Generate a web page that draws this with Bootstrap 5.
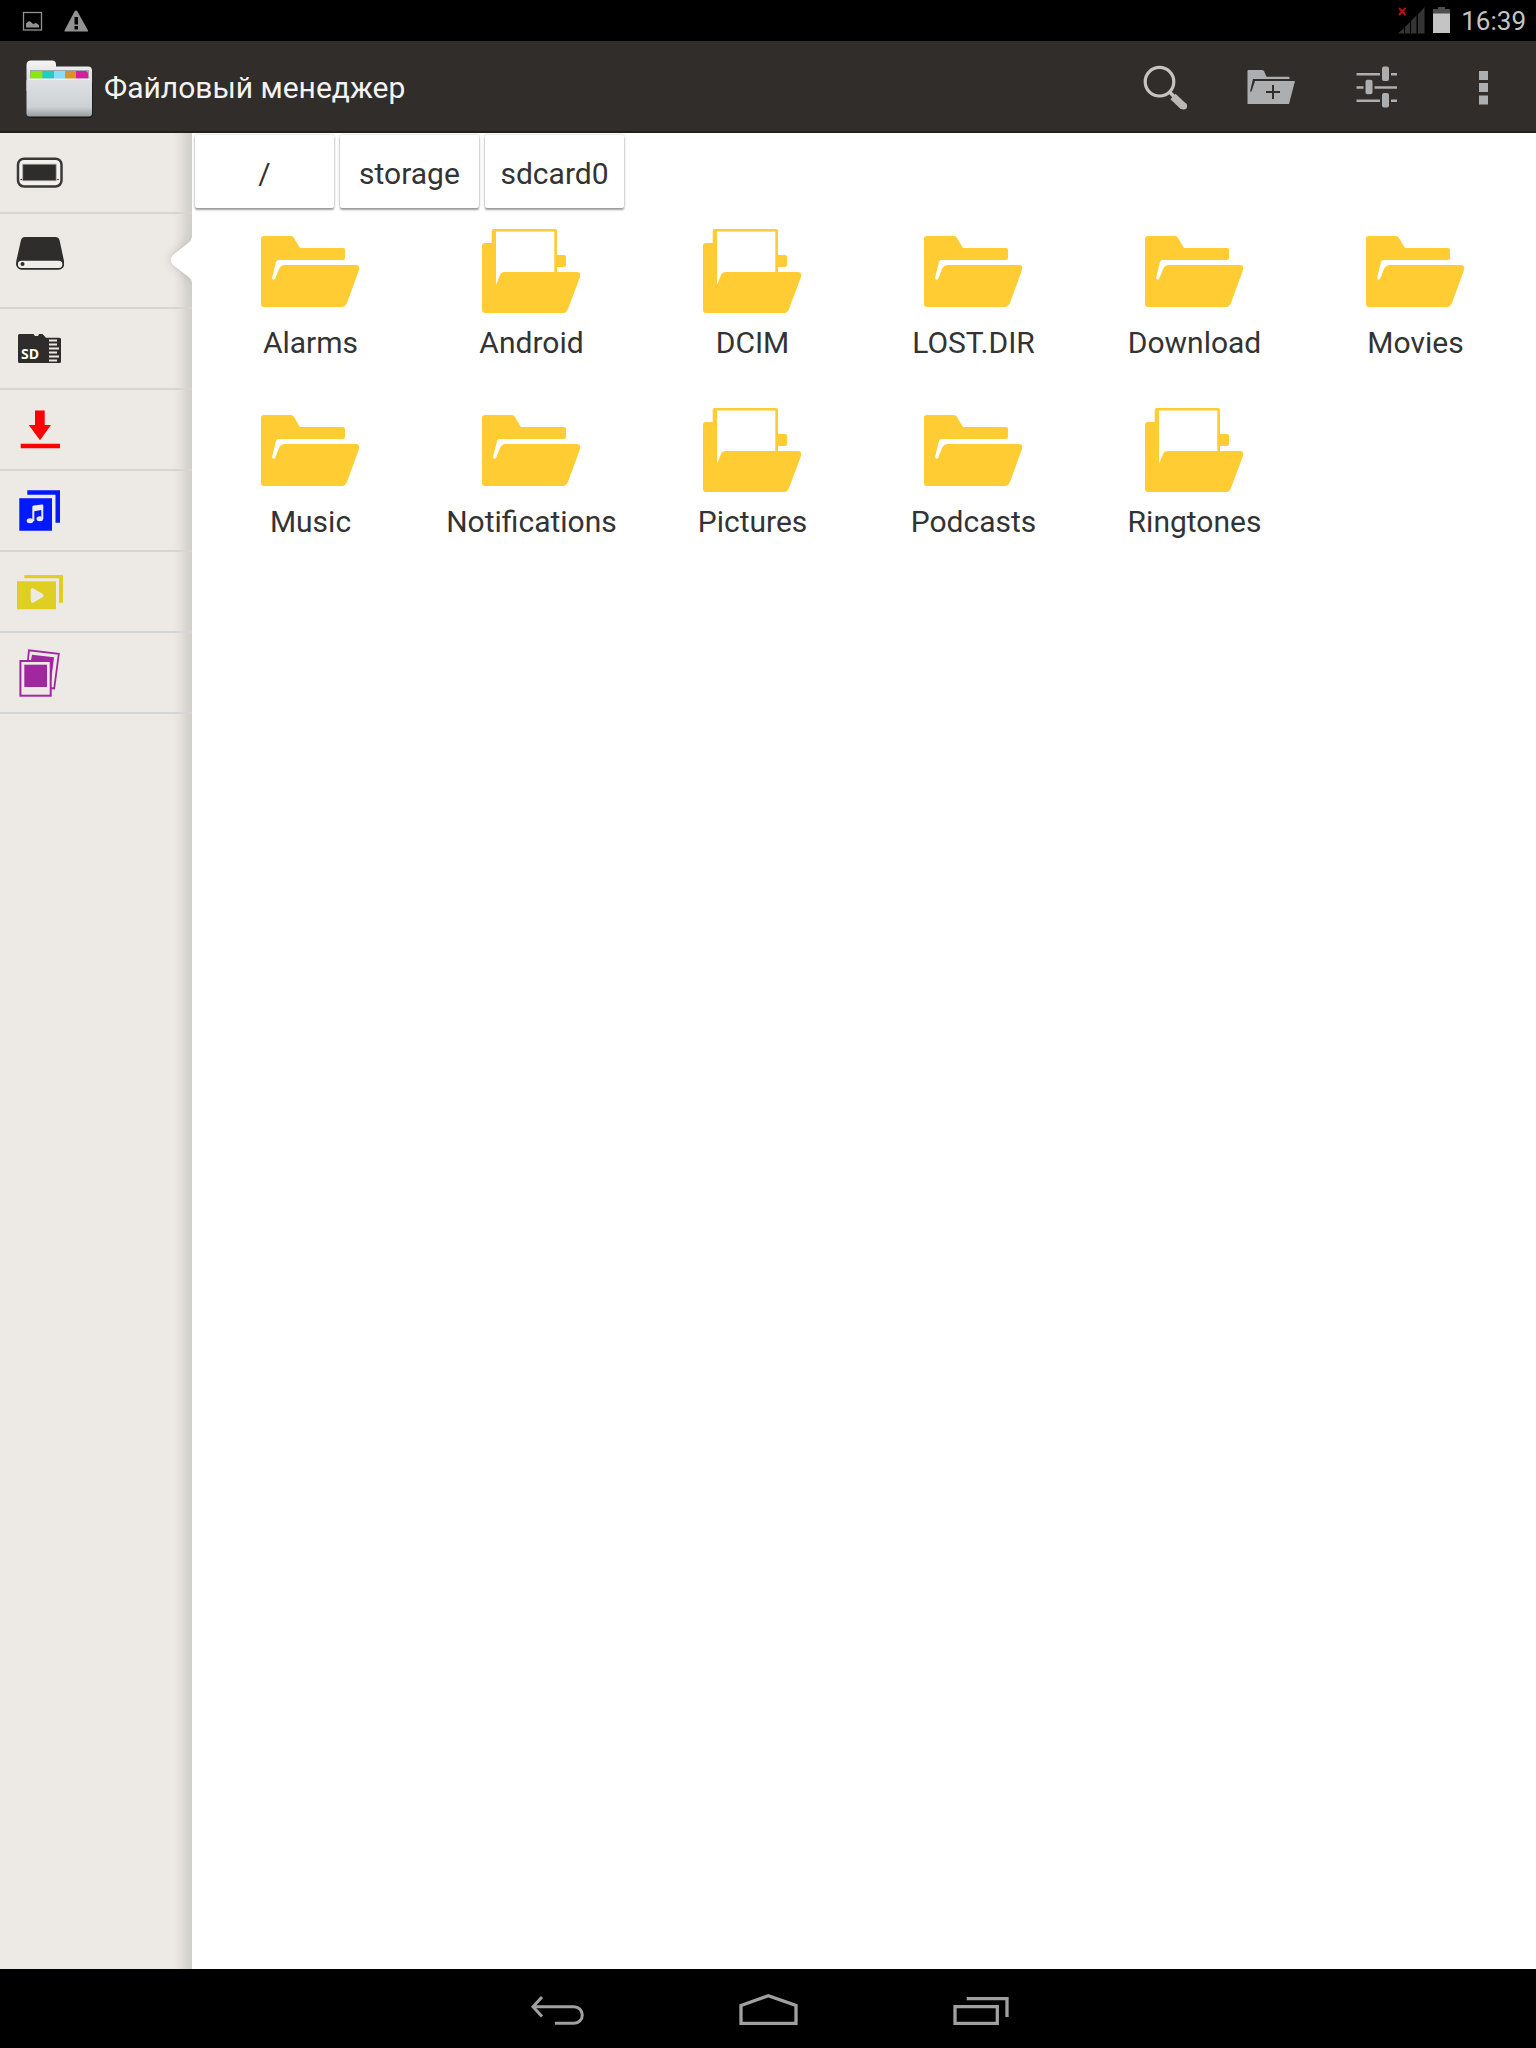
<!DOCTYPE html>
<html lang="ru">
<head>
<meta charset="utf-8">
<meta name="viewport" content="width=device-width, initial-scale=1">
<title>Файловый менеджер</title>
<link href="https://cdn.jsdelivr.net/npm/bootstrap@5.3.0/dist/css/bootstrap.min.css" rel="stylesheet">
<style>
  body { font-family: Roboto, "Noto Sans", sans-serif; font-size: 30px; line-height: 36px; color: #333; background: #fff; }
  svg { display: block; flex-shrink: 0; }

  .status-strip { height: 41px; background: #000; padding: 0 10px 0 20px; }
  .status-icons { gap: 20px; }
  .clock { font-size: 26px; line-height: 32px; color: #c4c4c4; }

  .app-header { height: 92px; padding: 0 0 0 24px; background: #312d2b; box-shadow: inset 0 -2px 0 #231f1c; }
  .app-title { font-size: 30px; line-height: 36px; padding-top: 2px; color: #f3f3f3; }
  .action-btn { width: 106px; height: 92px; border: 0; border-radius: 0; }

  .side-panel { width: 192px; background: linear-gradient(to left, #d0cec8 0, #d8d6d0 6px, #e5e2dd 12px, #edeae5 19px); }
  .side-item { height: 81px; padding: 16px 16px 0; border-bottom: 2px solid #d5d5d5; }
  .side-item.current { height: 95px; }
  .side-pointer { right: 0; top: 8px; }

  .crumbs { padding: 2px 3px 0; gap: 6px; }
  .crumb-btn { min-width: 139px; height: 73px; padding: 4px 12px 0; border: 0; border-radius: 2px; background: #fff; color: #333; font-size: 30px; line-height: 36px; box-shadow: 0 2px 2px rgba(0,0,0,.35), 0 0 3px rgba(0,0,0,.22); }
  .file-grid { margin: 5px 10px 0 8px; }
  .file-link { height: 179px; padding-top: 8px; gap: 8px; color: #333; }

  .nav-strip { height: 79px; background: #000; }
  .nav-key { width: 212px; height: 79px; border: 0; border-radius: 0; }
</style>
</head>
<body class="d-flex flex-column min-vh-100">

<svg width="0" height="0" class="position-absolute" aria-hidden="true">
  <symbol id="folder-empty" viewBox="0 0 113 96">
    <path fill="#ffcc33" d="M7 18q0-3 3-3H37q2 0 3 2L46 27H89q2 0 2 2V37q0 2-2 2H24q-1 0-2 2L18 57q1 3 3 1L25 48q2-4 6-4H102q4 0 3 5L93 82q-2 4-5 4H10q-3 0-3-3Z"/>
  </symbol>
  <symbol id="folder-full" viewBox="0 0 113 96">
    <path fill="#ffcc33" fill-rule="evenodd" d="M7 25q0-3 3-3H16.700V10q0-2 2-2H80q2 0 2 2V34H89q2 0 2 2V44q0 2-2 2H82V51H102q4 0 3 5L93 88q-2 4-4 4H10q-3 0-3-3ZM21 10.500V64L25 54q1-3 5-3H79.300V10.500Z"/>
  </symbol>
</svg>

<div class="status-strip d-flex align-items-center justify-content-between">
  <div class="status-icons d-flex align-items-center">
    <svg width="24" height="24" viewBox="0 0 24 24" aria-hidden="true">
      <rect x="3.500" y="3.500" width="18" height="17.500" fill="none" stroke="#929292" stroke-width="1.300"/>
      <path fill="#929292" d="M6 18.500v-4l3-2.500 2 1 2 2 3-1 3 2v2.500z"/>
    </svg>
    <svg width="24" height="24" viewBox="0 0 24 24" aria-hidden="true">
      <path fill="#929292" fill-rule="evenodd" d="M12 1.500q1 0 1.500 1L24 21.500v1H.5v-1L10.500 2.500q.5-1 1.500-1zM10.500 8v7.500h3.500V8zM10.500 17v3.500h3.500V17z"/>
    </svg>
  </div>
  <div class="d-flex align-items-center">
    <svg width="34" height="32" viewBox="0 0 34 32" aria-hidden="true">
      <path fill="#343434" d="M2 28.500 8 23v5.500zM9 28.500V22l5-5v11.500zM15 28.500V16l5.500-5.500v18zM22 28.500V9.500L28.500 2v26.500z"/>
      <path stroke="#b81414" stroke-width="2" d="M3 3l6.500 7M9.500 3 3 10"/>
    </svg>
    <svg width="31" height="32" viewBox="0 0 31 32" aria-hidden="true">
      <path fill="#4d4d4d" d="M3 4h5V2h7v2h5v5H3z"/>
      <path fill="#c4c4c4" d="M3 8.500h17V28H3z"/>
    </svg>
    <time class="clock">16:39</time>
  </div>
</div>

<header class="app-header d-flex align-items-center">
  <svg width="72" height="72" viewBox="0 0 72 72" aria-hidden="true" class="me-2">
    <defs>
      <linearGradient id="logoBack" x1="0" y1="0" x2="0" y2="1"><stop offset="0" stop-color="#f4f5f6"/><stop offset="1" stop-color="#c9cccf"/></linearGradient>
      <linearGradient id="logoFront" x1="0" y1="0" x2="0" y2="1"><stop offset="0" stop-color="#dfe1e4"/><stop offset=".75" stop-color="#ced1d4"/><stop offset="1" stop-color="#999c9e"/></linearGradient>
    </defs>
    <rect x="3" y="30" width="66" height="37" rx="4" fill="#1d1b1a"/>
    <path fill="url(#logoBack)" d="M2.500 14q0-4.500 4.500-4.500H28q4 0 4 4v2H64q4 0 4 4V40H2.500z"/>
    <path fill="#a3a6a8" d="M6 19h59v10H6z"/>
    <path fill="#8ae80c" d="M9 20h9.500v8h-12v-6z"/>
    <path fill="#23cdbd" d="M18.500 20h11.500v8h-11.500z"/>
    <path fill="#84dcff" d="M30 20h11v8h-11z"/>
    <path fill="#db9324" d="M41 20h11v8h-11z"/>
    <path fill="#d4209a" d="M52 20h10l2 2v6h-12z"/>
    <rect x="2.500" y="27.500" width="65.500" height="38" rx="3" fill="url(#logoFront)"/>
    <path stroke="#f3f4f5" d="M4 28.300h62.500"/>
  </svg>
  <h1 class="app-title fw-normal mb-0 me-auto">Файловый менеджер</h1>
  <button type="button" class="action-btn btn p-0 d-flex align-items-center justify-content-center" aria-label="Поиск">
    <svg width="48" height="48" viewBox="0 0 48 48" fill="none" stroke="#c6c4c1">
      <circle cx="18.500" cy="18.700" r="14.300" stroke-width="3.200"/>
      <path stroke-width="3.600" d="M28 28.500l6 6"/>
      <path stroke="#bab7b4" stroke-width="7.500" stroke-linejoin="round" d="M32 33.500l10.500 10"/>
      <circle cx="42.500" cy="43" r="3.600" fill="#bab7b4" stroke="none"/>
    </svg>
  </button>
  <button type="button" class="action-btn btn p-0 d-flex align-items-center justify-content-center" aria-label="Новая папка">
    <svg width="48" height="48" viewBox="0 0 48 48">
      <path fill="#adaeb0" d="M.5 8q0-1 1-1H15q1 0 2 1l2.500 5.700H41.500q1 0 1 1V16H6L3 28.500h1.500L8 18H48L42 41H.5z"/>
      <path stroke="#312d2b" stroke-width="2" d="M19 29h14M26 22v14"/>
    </svg>
  </button>
  <button type="button" class="action-btn btn p-0 d-flex align-items-center justify-content-center" aria-label="Настройки">
    <svg width="48" height="48" viewBox="0 0 48 48" fill="#adaeb0">
      <path d="M3.500 10h23.500v2.500H3.500zM38 10h6v2.500h-6zM3.500 23.300h7v2.500h-7zM21.500 23.300H44v2.500H21.500zM3.500 36.500h23.500V39H3.500zM38 36.500h6V39h-6z"/>
      <rect x="29" y="3.500" width="7" height="14.500" rx="2"/>
      <rect x="12.500" y="16.800" width="7" height="14.500" rx="2"/>
      <rect x="29" y="30" width="7" height="14.500" rx="2"/>
    </svg>
  </button>
  <button type="button" class="action-btn btn p-0 d-flex align-items-center justify-content-center" aria-label="Ещё">
    <svg width="48" height="48" viewBox="0 0 48 48" fill="#adaeb0">
      <path d="M20 8h9v9h-9zM20 20h9v9h-9zM20 32.500h9v9h-9z"/>
    </svg>
  </button>
</header>

<div class="d-flex flex-grow-1">
  <nav class="side-panel flex-shrink-0 d-flex flex-column" aria-label="Разделы">
    <a href="#" class="side-item d-block" aria-label="Устройство">
      <svg width="48" height="48" viewBox="0 0 48 48" fill="#2e2d2b">
        <rect x="2" y="9.700" width="43.500" height="27.800" rx="6" fill="#f3f1ed" stroke="#3a3937" stroke-width="2.500"/>
        <path d="M6.700 15.200h33.500v16.500H6.700z" stroke="#aaa8a4" stroke-width=".7"/>
        <circle cx="5.200" cy="30.500" r=".8"/><circle cx="42" cy="30.500" r=".8"/>
      </svg>
    </a>
    <a href="#" class="side-item current d-block position-relative" aria-label="Накопитель" aria-current="page">
      <svg width="48" height="48" viewBox="0 0 48 48" fill="#2e2d2b">
        <path d="M5 10q1-3 4-3H39.500q3 0 4 3L48 31v4H.3v-4z"/>
        <rect x="1" y="29.800" width="46.300" height="9" rx="4.500" fill="#f0eeea" stroke="#2e2d2b" stroke-width="1.800"/>
        <circle cx="6.500" cy="34" r="2"/>
      </svg>
      <svg class="side-pointer position-absolute" width="40" height="78" viewBox="0 0 40 78" aria-hidden="true">
        <defs><filter id="soft" x="-50%" y="-50%" width="200%" height="200%"><feGaussianBlur stdDeviation="4"/></filter></defs>
        <path fill="#aaa7a0" opacity=".6" filter="url(#soft)" d="M40 15q-1 3-5 6L21 32q-5 5 0 11L35 55q4 3 5 7z"/>
        <path fill="#fff" d="M40 15q-1 4-4 6L21 33q-4.500 5 0 10L36 54.500q4 3 4 7z"/>
      </svg>
    </a>
    <a href="#" class="side-item d-block" aria-label="Карта SD">
      <svg width="48" height="48" viewBox="0 0 48 48" fill="#2e2d2b">
        <path d="M2 10.500q0-1.500 1.500-1.500H17.500l1.500 2h3l1-2h3.500l3.500 3.700H43.500q1.500 0 1.500 1.500V36.500q0 1.500-1.500 1.500H3.500q-1.500 0-1.500-1.500z"/>
        <path fill="#edeae5" d="M33 14.500h8v2h-8zM33 18.500h8v2h-8zM33 22.500h10v2h-10zM33 26.500h8v2h-8zM33 30.500h10v2h-10zM33 34.500h8v2h-8z"/>
        <text x="5" y="34" fill="#fff" font-family="Open Sans, sans-serif" font-weight="700" font-size="14">SD</text>
      </svg>
    </a>
    <a href="#" class="side-item d-block" aria-label="Загрузки">
      <svg width="48" height="48" viewBox="0 0 48 48" fill="#ff0000">
        <path d="M19 4.500h9.700V19H35L24 34.200 12.700 19H19zM4.700 37.700H44v4.600H4.700z"/>
      </svg>
    </a>
    <a href="#" class="side-item d-block" aria-label="Музыка">
      <svg width="48" height="48" viewBox="0 0 48 48" fill="#0019ff">
        <path d="M3.300 11.300H36v32.400H3.300zM11.300 3.300H44v32.400h-4.500V7.700H11.300z"/>
        <g fill="#edeae5"><path d="M16.300 20q0-1.200 1.300-1.400l8.500-1.200q1.200 0 1.200 1.200V32h-2v-9l-7 1.200v10h-2z"/><ellipse cx="14" cy="33.700" rx="3.300" ry="2.500"/><ellipse cx="23.800" cy="31.800" rx="3.300" ry="2.500"/></g>
      </svg>
    </a>
    <a href="#" class="side-item d-block" aria-label="Видео">
      <svg width="48" height="48" viewBox="0 0 48 48" fill="#dfcf22">
        <path d="M1 13.300h39v28H1zM8.300 7H47v27.700h-4V10.300H8.300z"/>
        <path fill="#edeae5" d="M14.700 22q0-2 2-2l10 6q2 1.500 0 3l-9 5.500q-3 1-3-2z"/>
      </svg>
    </a>
    <a href="#" class="side-item d-block" aria-label="Фотографии">
      <svg width="48" height="48" viewBox="0 0 48 48" fill="#a127a1">
        <path fill="none" stroke="#a127a1" stroke-width="1.800" d="M12 11 12.900 1.300 42.800 4.800 38.200 39.500 33 39"/>
        <path d="M16 5.800 38 8.300 35 33 31 32 15 11z"/>
        <rect x="4.400" y="12" width="30.300" height="34.700" fill="#edeae5" stroke="#a127a1" stroke-width="2"/>
        <path d="M8.300 15.700H31V38H8.300z"/>
      </svg>
    </a>
  </nav>

  <main class="flex-grow-1">
    <nav class="crumbs d-flex" aria-label="Путь">
      <button type="button" class="crumb-btn btn">/</button>
      <button type="button" class="crumb-btn btn">storage</button>
      <button type="button" class="crumb-btn btn">sdcard0</button>
    </nav>
    <div class="file-grid row row-cols-6 g-0">
      <div class="col"><a href="#" class="file-link d-flex flex-column align-items-center text-decoration-none"><svg width="113" height="96"><use href="#folder-empty"/></svg><span>Alarms</span></a></div>
      <div class="col"><a href="#" class="file-link d-flex flex-column align-items-center text-decoration-none"><svg width="113" height="96"><use href="#folder-full"/></svg><span>Android</span></a></div>
      <div class="col"><a href="#" class="file-link d-flex flex-column align-items-center text-decoration-none"><svg width="113" height="96"><use href="#folder-full"/></svg><span>DCIM</span></a></div>
      <div class="col"><a href="#" class="file-link d-flex flex-column align-items-center text-decoration-none"><svg width="113" height="96"><use href="#folder-empty"/></svg><span>LOST.DIR</span></a></div>
      <div class="col"><a href="#" class="file-link d-flex flex-column align-items-center text-decoration-none"><svg width="113" height="96"><use href="#folder-empty"/></svg><span>Download</span></a></div>
      <div class="col"><a href="#" class="file-link d-flex flex-column align-items-center text-decoration-none"><svg width="113" height="96"><use href="#folder-empty"/></svg><span>Movies</span></a></div>
      <div class="col"><a href="#" class="file-link d-flex flex-column align-items-center text-decoration-none"><svg width="113" height="96"><use href="#folder-empty"/></svg><span>Music</span></a></div>
      <div class="col"><a href="#" class="file-link d-flex flex-column align-items-center text-decoration-none"><svg width="113" height="96"><use href="#folder-empty"/></svg><span>Notifications</span></a></div>
      <div class="col"><a href="#" class="file-link d-flex flex-column align-items-center text-decoration-none"><svg width="113" height="96"><use href="#folder-full"/></svg><span>Pictures</span></a></div>
      <div class="col"><a href="#" class="file-link d-flex flex-column align-items-center text-decoration-none"><svg width="113" height="96"><use href="#folder-empty"/></svg><span>Podcasts</span></a></div>
      <div class="col"><a href="#" class="file-link d-flex flex-column align-items-center text-decoration-none"><svg width="113" height="96"><use href="#folder-full"/></svg><span>Ringtones</span></a></div>
    </div>
  </main>
</div>

<footer class="nav-strip d-flex justify-content-center">
  <button type="button" class="nav-key btn p-0 d-flex align-items-center justify-content-center" aria-label="Назад">
    <svg width="64" height="47" viewBox="0 0 64 47" fill="none" stroke="#a0a0a0" stroke-width="3">
      <path d="M9.500 21.700H50a8.300 8.300 0 0 1 0 16.600H31"/><path d="M18 12 9 21.700 18 31.500"/>
    </svg>
  </button>
  <button type="button" class="nav-key btn p-0 d-flex align-items-center justify-content-center" aria-label="Домой">
    <svg width="64" height="47" viewBox="0 0 64 47" fill="none" stroke="#a0a0a0" stroke-width="3.300">
      <path d="M5 20.500 32.300 10.800 60 20.500V38.300H5z"/>
    </svg>
  </button>
  <button type="button" class="nav-key btn p-0 d-flex align-items-center justify-content-center" aria-label="Недавние">
    <svg width="64" height="47" viewBox="0 0 64 47" fill="none" stroke="#a0a0a0" stroke-width="3.300">
      <path d="M7 21.700h42.300V38.300H7zM18.700 13.700H59V32"/>
    </svg>
  </button>
</footer>

<script src="https://cdn.jsdelivr.net/npm/bootstrap@5.3.0/dist/js/bootstrap.bundle.min.js"></script>
</body>
</html>
